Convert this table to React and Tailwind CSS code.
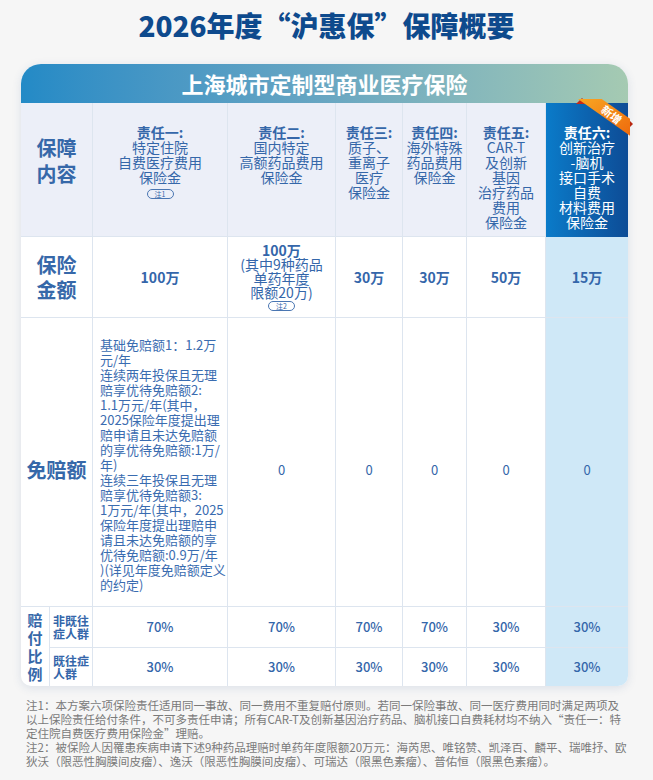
import React from 'react';

// 2026 沪惠保 coverage summary card
const columns = [
  { head: ['责任一:', '特定住院', '自费医疗费用', '保险金'], note: '注1' },
  { head: ['责任二:', '国内特定', '高额药品费用', '保险金'] },
  { head: ['责任三:', '质子、', '重离子', '医疗', '保险金'] },
  { head: ['责任四:', '海外特殊', '药品费用', '保险金'] },
  { head: ['责任五:', 'CAR-T', '及创新', '基因', '治疗药品', '费用', '保险金'] },
  { head: ['责任六:', '创新治疗', '-脑机', '接口手术', '自费', '材料费用', '保险金'], hot: true },
];

const amounts = ['100万', null, '30万', '30万', '50万', '15万'];
const ratioNew = ['70%', '70%', '70%', '70%', '30%', '30%'];
const ratioOld = ['30%', '30%', '30%', '30%', '30%', '30%'];

const deductibleLines = [
  '基础免赔额1：1.2万',
  '元/年',
  '连续两年投保且无理',
  '赔享优待免赔额2:',
  '1.1万元/年(其中，',
  '2025保险年度提出理',
  '赔申请且未达免赔额',
  '的享优待免赔额:1万/',
  '年)',
  '连续三年投保且无理',
  '赔享优待免赔额3:',
  '1万元/年(其中，2025',
  '保险年度提出理赔申',
  '请且未达免赔额的享',
  '优待免赔额:0.9万/年',
  ')(详见年度免赔额定义',
  '的约定)',
];

const notes = [
  '注1：本方案六项保险责任适用同一事故、同一费用不重复赔付原则。若同一保险事故、同一医疗费用同时满足两项及',
  '以上保险责任给付条件，不可多责任申请；所有CAR-T及创新基因治疗药品、脑机接口自费耗材均不纳入“责任一：特',
  '定住院自费医疗费用保险金”理赔。',
  '注2：被保险人因罹患疾病申请下述9种药品理赔时单药年度限额20万元：海芮思、唯铭赞、凯泽百、麟平、瑞唯抒、欧',
  '狄沃（限恶性胸膜间皮瘤）、逸沃（限恶性胸膜间皮瘤）、可瑞达（限黑色素瘤）、普佑恒（限黑色素瘤）。',
];

function NoteTag({ children }) {
  return (
    <span className="mx-auto flex h-[10px] w-[27px] items-center justify-center rounded-full border border-[#4a76b2] text-[7px] leading-[8px] font-normal">
      {children}
    </span>
  );
}

function NewRibbon() {
  return (
    <>
      <svg className="absolute left-[28px] top-[-8px]" width="60" height="45" viewBox="0 0 60 45">
        <defs>
          <linearGradient id="rib" x1="0" y1="0" x2="1" y2="1">
            <stop offset="0" stopColor="#f9a623" />
            <stop offset="1" stopColor="#ee6a0c" />
          </linearGradient>
        </defs>
        <polygon points="2,9 8,3 14,9" fill="#c62a16" />
        <polygon points="54,24 59,29 54,34" fill="#b8260f" />
        <polygon points="4,4 27.7,4 56,23.8 56,40.8" fill="url(#rib)" />
      </svg>
      <span className="absolute left-[53px] top-[3px] flex h-[16px] w-[26px] rotate-[38deg] items-center justify-center text-[11px] font-bold leading-none text-white">
        新增
      </span>
    </>
  );
}

export default function App() {
  const line = 'border-[#dde5ef]';
  return (
    <div className="min-h-screen bg-[#f6f6f6] font-['Noto_Sans_CJK_SC','Noto_Sans',sans-serif] text-[#3466aa]">
      <h1 className="pt-[7px] text-center text-[28px] font-black leading-[36px] text-[#0e4a8d]">
        2026年度“沪惠保”保障概要
      </h1>

      <div className="mx-[21px] mt-[21px] w-[607px] rounded-t-[20px] rounded-b-[10px] bg-white shadow-[0_2px_10px_rgba(40,80,140,0.13)]">
        <div className="flex h-[39px] items-center justify-center rounded-t-[20px] bg-linear-to-r from-[#238ac6] via-[#68a6c2] to-[#a5cab2] text-[22px] font-bold text-white">
          上海城市定制型商业医疗保险
        </div>

        <div className="grid grid-cols-[29px_43px_135px_108px_67px_64px_79px_82px] grid-rows-[134px_81px_289px_41px_38px]">
          {/* header row */}
          <div className={`col-span-2 border-r border-b ${line} bg-[#eceff8] pt-[32px] text-center text-[20px] font-bold leading-[26px] text-[#3668a9]`}>
            <div>保障</div>
            <div>内容</div>
          </div>
          {columns.map((c, i) => (
            <div
              key={i}
              className={
                c.hot
                  ? 'relative bg-linear-to-r from-[#0a7bc9] to-[#0d4c96] pt-[22px] text-center text-[14px] leading-[15px] text-white'
                  : `border-r border-b ${line} bg-[#eceff8] pt-[22px] text-center text-[14px] leading-[15px] text-[#3567a9]`
              }
            >
              {c.head.map((t, j) => (
                <div key={j} className={j === 0 ? 'font-bold' : ''}>
                  {t}
                </div>
              ))}
              {c.note && (
                <div className="mt-[4px]">
                  <NoteTag>{c.note}</NoteTag>
                </div>
              )}
              {c.hot && <NewRibbon />}
            </div>
          ))}

          {/* amount row */}
          <div className={`col-span-2 flex flex-col items-center justify-center border-r border-b ${line} text-[20px] font-bold leading-[25px] text-[#3668a9]`}>
            <div>保险</div>
            <div>金额</div>
          </div>
          {amounts.map((a, i) => (
            <div
              key={i}
              className={`flex flex-col items-center justify-center border-b ${line} text-center text-[14px] ${
                i === 5 ? 'bg-[#cfe8f7]' : 'border-r'
              }`}
            >
              {a ? (
                <span className="font-bold">{a}</span>
              ) : (
                <div className="leading-[14px]">
                  <div className="font-bold">100万</div>
                  <div>(其中9种药品</div>
                  <div>单药年度</div>
                  <div>限额20万)</div>
                  <div className="mt-[2px]">
                    <NoteTag>注2</NoteTag>
                  </div>
                </div>
              )}
            </div>
          ))}

          {/* deductible row */}
          <div className={`col-span-2 flex items-center justify-center border-r border-b ${line} pt-[15px] text-[20px] font-bold text-[#3668a9]`}>
            免赔额
          </div>
          <div className={`flex flex-col justify-center border-r border-b ${line} pl-[7px] pt-[5px] text-[13px] leading-[15px] text-[#3a6cb0]`}>
            {deductibleLines.map((t, j) => (
              <div key={j} className="whitespace-nowrap">
                {t}
              </div>
            ))}
          </div>
          {[0, 1, 2, 3, 4].map((i) => (
            <div
              key={i}
              className={`flex items-center justify-center border-b ${line} pt-[15px] text-[13px] ${
                i === 4 ? 'bg-[#cfe8f7]' : 'border-r'
              }`}
            >
              0
            </div>
          ))}

          {/* ratio rows */}
          <div className={`row-span-2 flex flex-col items-center justify-center rounded-bl-[10px] border-r ${line} text-[15px] font-bold leading-[18px] text-[#3668a9]`}>
            <span>赔</span>
            <span>付</span>
            <span>比</span>
            <span>例</span>
          </div>
          <div className={`flex items-center justify-center border-r border-b ${line} text-[12px] font-bold leading-[13px]`}>
            <div className="text-left">
              <div>非既往</div>
              <div>症人群</div>
            </div>
          </div>
          {ratioNew.map((r, i) => (
            <div
              key={i}
              className={`flex items-center justify-center border-b ${line} text-[13px] font-medium ${
                i === 5 ? 'bg-[#cfe8f7]' : 'border-r'
              }`}
            >
              {r}
            </div>
          ))}
          <div className={`flex items-center justify-center border-r ${line} text-[12px] font-bold leading-[13px]`}>
            <div className="text-left">
              <div>既往症</div>
              <div>人群</div>
            </div>
          </div>
          {ratioOld.map((r, i) => (
            <div
              key={i}
              className={`flex items-center justify-center ${line} text-[13px] font-medium ${
                i === 5 ? 'rounded-br-[10px] bg-[#cfe8f7]' : 'border-r'
              }`}
            >
              {r}
            </div>
          ))}
        </div>
      </div>

      <div className="mt-[12px] px-[26px] text-[11.5px] leading-[14px] text-[#7a7a7a]">
        {notes.map((t, i) => (
          <div key={i} className="whitespace-nowrap">
            {t}
          </div>
        ))}
      </div>
    </div>
  );
}
